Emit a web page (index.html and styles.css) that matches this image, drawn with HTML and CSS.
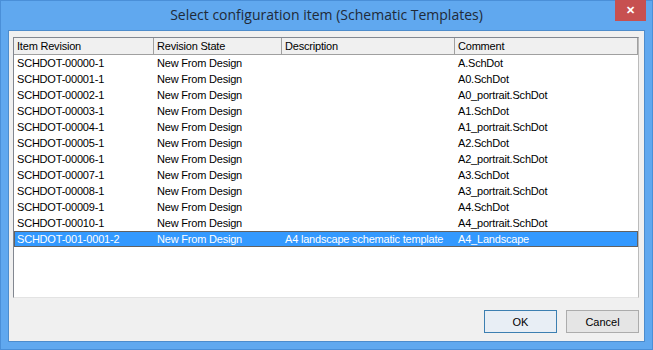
FILE: index.html
```html
<!DOCTYPE html>
<html lang="en">
<head>
    <meta charset="UTF-8">
    <title>Select configuration item</title>
    <link rel="stylesheet" href="styles.css">
</head>
<body>
    <div class="window">
        <!-- Title bar -->
        <div class="titlebar">
            <span class="title">Select configuration item (Schematic Templates)</span>
            <div class="close">&#x2715;</div>
        </div>

        <div class="client">
            <!-- Item list -->
            <div class="list">
                <div class="row header">
                    <div class="cell c1">Item Revision</div>
                    <div class="cell c2">Revision State</div>
                    <div class="cell c3">Description</div>
                    <div class="cell c4">Comment</div>
                </div>
                <div class="row"><div class="cell c1">SCHDOT-00000-1</div><div class="cell c2">New From Design</div><div class="cell c3"></div><div class="cell c4">A.SchDot</div></div>
                <div class="row"><div class="cell c1">SCHDOT-00001-1</div><div class="cell c2">New From Design</div><div class="cell c3"></div><div class="cell c4">A0.SchDot</div></div>
                <div class="row"><div class="cell c1">SCHDOT-00002-1</div><div class="cell c2">New From Design</div><div class="cell c3"></div><div class="cell c4">A0_portrait.SchDot</div></div>
                <div class="row"><div class="cell c1">SCHDOT-00003-1</div><div class="cell c2">New From Design</div><div class="cell c3"></div><div class="cell c4">A1.SchDot</div></div>
                <div class="row"><div class="cell c1">SCHDOT-00004-1</div><div class="cell c2">New From Design</div><div class="cell c3"></div><div class="cell c4">A1_portrait.SchDot</div></div>
                <div class="row"><div class="cell c1">SCHDOT-00005-1</div><div class="cell c2">New From Design</div><div class="cell c3"></div><div class="cell c4">A2.SchDot</div></div>
                <div class="row"><div class="cell c1">SCHDOT-00006-1</div><div class="cell c2">New From Design</div><div class="cell c3"></div><div class="cell c4">A2_portrait.SchDot</div></div>
                <div class="row"><div class="cell c1">SCHDOT-00007-1</div><div class="cell c2">New From Design</div><div class="cell c3"></div><div class="cell c4">A3.SchDot</div></div>
                <div class="row"><div class="cell c1">SCHDOT-00008-1</div><div class="cell c2">New From Design</div><div class="cell c3"></div><div class="cell c4">A3_portrait.SchDot</div></div>
                <div class="row"><div class="cell c1">SCHDOT-00009-1</div><div class="cell c2">New From Design</div><div class="cell c3"></div><div class="cell c4">A4.SchDot</div></div>
                <div class="row"><div class="cell c1">SCHDOT-00010-1</div><div class="cell c2">New From Design</div><div class="cell c3"></div><div class="cell c4">A4_portrait.SchDot</div></div>
                <div class="row selected"><div class="cell c1">SCHDOT-001-0001-2</div><div class="cell c2">New From Design</div><div class="cell c3">A4 landscape schematic template</div><div class="cell c4">A4_Landscape</div></div>
            </div>

            <!-- Buttons -->
            <div class="actions">
                <button class="btn default">OK</button>
                <button class="btn">Cancel</button>
            </div>
        </div>
    </div>
</body>
</html>
```

FILE: styles.css
```css
body {
    margin: 0;
    padding: 0;
    font-family: "Liberation Sans", Arial, sans-serif;
    font-size: 11px;
    letter-spacing: -0.2px;
    color: #000;
}
.window {
    width: 653px;
    height: 350px;
    box-sizing: border-box;
    background-color: #60a8ef;
    border: 1px solid #4a8fd8;
    display: flex;
    flex-direction: column;
}
.titlebar {
    height: 29px;
    position: relative;
    display: flex;
    justify-content: center;
    align-items: center;
}
.title {
    font-family: "Open Sans", "Liberation Sans", sans-serif;
    font-size: 14px;
    letter-spacing: 0;
    color: #1f2a38;
    margin-top: -2px;
}
.close {
    position: absolute;
    top: -1px;
    right: 6px;
    width: 31px;
    height: 21px;
    background-color: #c75050;
    color: #fff;
    font-size: 11px;
    font-weight: bold;
    display: flex;
    justify-content: center;
    align-items: center;
}
.client {
    flex: 1;
    margin: 0 7px 7px 7px;
    background-color: #f0f0f0;
    border: 1px solid #4d8ccc;
    padding: 6px 5px 0 4px;
    display: flex;
    flex-direction: column;
}
.list {
    height: 261px;
    box-sizing: border-box;
    background-color: #fff;
    border: 1px solid #828790;
    border-right-color: #bbb;
    border-bottom-color: #e3e3e3;
    display: flex;
    flex-direction: column;
}
.row {
    display: flex;
    height: 16px;
    line-height: 16px;
    white-space: nowrap;
}
.row.header {
    background-color: #f0f0f0;
    border-bottom: 1px solid #a0a0a0;
    border-right: 1px solid #a0a0a0;
}
.cell {
    padding-left: 3px;
    overflow: hidden;
    box-sizing: border-box;
}
.header .cell {
    border-right: 1px solid #a0a0a0;
}
.header .cell.c4 {
    border-right: none;
}
.c1 { width: 140px; }
.c2 { width: 128px; }
.c3 { width: 173px; }
.c4 { flex: 1; }
.row.selected {
    background-color: #3399ff;
    color: #fff;
    outline: 1px solid #626262;
    outline-offset: -1px;
}
.actions {
    display: flex;
    justify-content: flex-end;
    gap: 9px;
    margin-top: 12px;
}
.btn {
    width: 73px;
    height: 23px;
    font-family: "Liberation Sans", Arial, sans-serif;
    font-size: 11px;
    color: #000;
    background-color: #e5e5e5;
    border: 1px solid #acacac;
    padding: 0;
}
.btn.default {
    border-color: #3c7fb1;
    background-color: #e8eef5;
}
```
